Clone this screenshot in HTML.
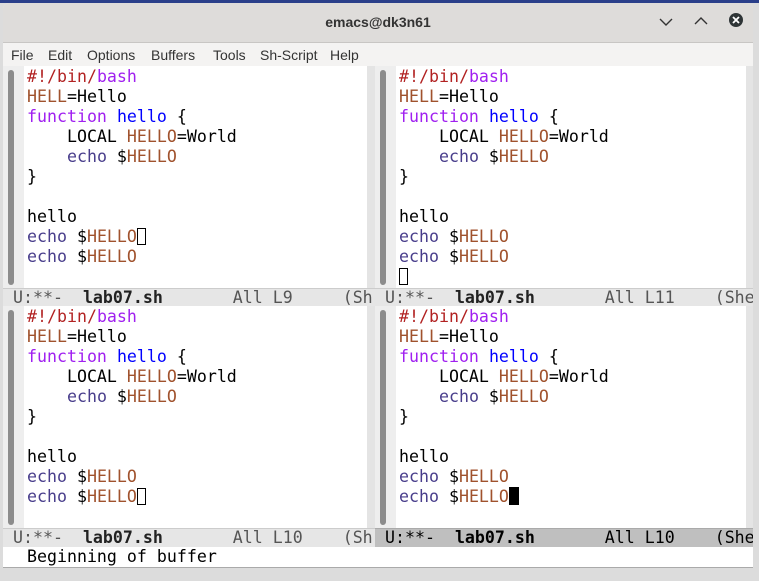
<!DOCTYPE html>
<html><head><meta charset="utf-8"><style>
body{margin:0;width:759px;height:581px;overflow:hidden;background:linear-gradient(#2a3f8a 0,#2a3f8a 3px,#dcdcdc 3px);position:relative;font-family:"DejaVu Sans Mono","Liberation Mono",monospace}
.win{position:absolute;left:3px;top:3px;width:750px;height:564px;background:#f4f3f2;border-radius:6px 6px 0 0;overflow:hidden}
.title{position:absolute;left:0;top:0;width:750px;height:39px;background:#dedcda;border-bottom:1px solid #c8c6c4;font:bold 14px "Liberation Sans",sans-serif;color:#333;text-align:center;line-height:39px}
.menu{position:absolute;left:0;top:40px;width:750px;height:24px;border-bottom:1px solid #dad8d6;font:14px "Liberation Sans",sans-serif;color:#333;line-height:24px}
.menu span{position:absolute}
.pane{position:absolute;background:#fff;overflow:hidden}
.fr{position:absolute;background:#eeeeee}
.thumb{position:absolute;background:#8c8c8c;border-radius:3px}
.code{position:absolute;font-size:16.6px;line-height:20px;white-space:pre;color:#000}
.ml{position:absolute;height:18px;line-height:18px;font-size:16.6px;white-space:pre;overflow:hidden}
.r{color:#b22222}.p{color:#a020f0}.s{color:#a0522d}.b{color:#0000ff}.e{color:#483d8b}
.cur{display:inline-block;width:9px;height:17px;border:1px solid #000;box-sizing:border-box;vertical-align:-3px}
.curf{display:inline-block;width:10px;height:18px;background:#000;vertical-align:-3px}
</style></head><body>
<div class="win">
<div class="title">emacs@dk3n61
<svg style="position:absolute;left:656px;top:14px" width="14" height="10"><path d="M1 2 L7 8 L13 2" stroke="#333" stroke-width="1.4" fill="none"/></svg>
<svg style="position:absolute;left:691px;top:13px" width="14" height="10"><path d="M1 8 L7 2 L13 8" stroke="#333" stroke-width="1.4" fill="none"/></svg>
<svg style="position:absolute;left:725px;top:9px" width="16" height="16"><circle cx="8" cy="8" r="7" fill="#2e3436"/><path d="M5 5 L11 11 M11 5 L5 11" stroke="#fff" stroke-width="1.8"/></svg>
</div>
<div class="menu"><span style="left:8px">File</span><span style="left:45px">Edit</span><span style="left:84px">Options</span><span style="left:148px">Buffers</span><span style="left:210px">Tools</span><span style="left:257px">Sh-Script</span><span style="left:327px">Help</span></div>
</div>

<!-- top-left -->
<div class="pane" style="left:3px;top:66px;width:372px;height:222px"></div>
<div class="fr" style="left:3px;top:66px;width:21px;height:222px"></div>
<div class="thumb" style="left:8px;top:70px;width:6px;height:215px"></div>
<div class="fr" style="left:367px;top:66px;width:8px;height:222px;background:#e4e4e4"></div>
<div class="code" style="left:27px;top:67px"><span class="r">#!/bin/</span><span class="p">bash</span>
<span class="s">HELL</span>=Hello
<span class="p">function</span> <span class="b">hello</span> {
    LOCAL <span class="s">HELLO</span>=World
    <span class="e">echo</span> $<span class="s">HELLO</span>
}

hello
<span class="e">echo</span> $<span class="s">HELLO</span><span class="cur"></span>
<span class="e">echo</span> $<span class="s">HELLO</span></div>
<div class="ml" style="left:3px;top:288px;width:372px;background:#e6e6e6;color:#555;border-top:1px solid #ccc"> U:**-  <b style="color:#222">lab07.sh</b>       All L9     (Sh</div>

<!-- top-right -->
<div class="pane" style="left:375px;top:66px;width:378px;height:222px"></div>
<div class="fr" style="left:375px;top:66px;width:21px;height:222px"></div>
<div class="thumb" style="left:380px;top:70px;width:6px;height:215px"></div>
<div class="fr" style="left:746px;top:66px;width:7px;height:222px;background:#e4e4e4"></div>
<div class="code" style="left:399px;top:67px"><span class="r">#!/bin/</span><span class="p">bash</span>
<span class="s">HELL</span>=Hello
<span class="p">function</span> <span class="b">hello</span> {
    LOCAL <span class="s">HELLO</span>=World
    <span class="e">echo</span> $<span class="s">HELLO</span>
}

hello
<span class="e">echo</span> $<span class="s">HELLO</span>
<span class="e">echo</span> $<span class="s">HELLO</span>
<span class="cur"></span></div>
<div class="ml" style="left:375px;top:288px;width:378px;background:#e6e6e6;color:#555;border-top:1px solid #ccc"> U:**-  <b style="color:#222">lab07.sh</b>       All L11    (She</div>

<!-- bottom-left -->
<div class="pane" style="left:3px;top:306px;width:372px;height:222px"></div>
<div class="fr" style="left:3px;top:306px;width:21px;height:222px"></div>
<div class="thumb" style="left:8px;top:310px;width:6px;height:215px"></div>
<div class="fr" style="left:367px;top:306px;width:8px;height:222px;background:#e4e4e4"></div>
<div class="code" style="left:27px;top:307px"><span class="r">#!/bin/</span><span class="p">bash</span>
<span class="s">HELL</span>=Hello
<span class="p">function</span> <span class="b">hello</span> {
    LOCAL <span class="s">HELLO</span>=World
    <span class="e">echo</span> $<span class="s">HELLO</span>
}

hello
<span class="e">echo</span> $<span class="s">HELLO</span>
<span class="e">echo</span> $<span class="s">HELLO</span><span class="cur"></span></div>
<div class="ml" style="left:3px;top:528px;width:372px;background:#e6e6e6;color:#555;border-top:1px solid #ccc"> U:**-  <b style="color:#222">lab07.sh</b>       All L10    (Sh</div>

<!-- bottom-right -->
<div class="pane" style="left:375px;top:306px;width:378px;height:222px"></div>
<div class="fr" style="left:375px;top:306px;width:21px;height:222px"></div>
<div class="thumb" style="left:380px;top:310px;width:6px;height:215px"></div>
<div class="fr" style="left:746px;top:306px;width:7px;height:222px;background:#e4e4e4"></div>
<div class="code" style="left:399px;top:307px"><span class="r">#!/bin/</span><span class="p">bash</span>
<span class="s">HELL</span>=Hello
<span class="p">function</span> <span class="b">hello</span> {
    LOCAL <span class="s">HELLO</span>=World
    <span class="e">echo</span> $<span class="s">HELLO</span>
}

hello
<span class="e">echo</span> $<span class="s">HELLO</span>
<span class="e">echo</span> $<span class="s">HELLO</span><span class="curf"></span></div>
<div class="ml" style="left:375px;top:528px;width:378px;background:#bfbfbf;color:#000;border-top:1px solid #aaa;border-bottom:1px solid #999"> U:**-  <b>lab07.sh</b>       All L10    (She</div>

<!-- minibuffer -->
<div class="pane" style="left:3px;top:547px;width:750px;height:20px;border-bottom:1px solid #aaa"></div>
<div class="code" style="left:27px;top:547px">Beginning of buffer</div>
</body></html>
